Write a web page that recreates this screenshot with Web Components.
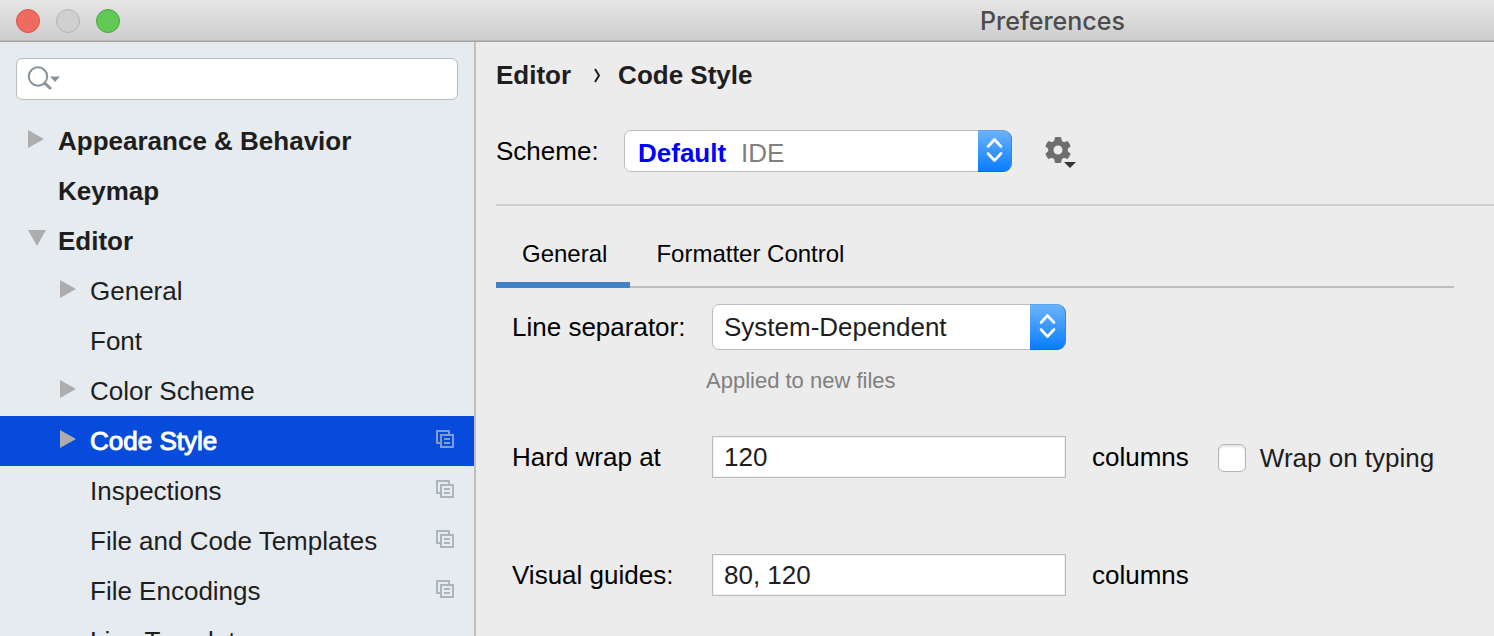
<!DOCTYPE html>
<html lang="en">
<head>
<meta charset="utf-8">
<meta name="viewport" content="width=device-width, initial-scale=1">
<title>Preferences</title>
<style>
  html, body { margin: 0; height: 100%; }
  body {
    overflow: hidden;
    background: #ececec;
    color: #000;
    font: 26px/32px "Liberation Sans", Arial, sans-serif;
  }
</style>
</head>
<body>
<pref-window>
  <title-bar slot="title">Preferences</title-bar>
  <settings-sidebar slot="sidebar">
    <tree-item strong arrow="right">Appearance &amp; Behavior</tree-item>
    <tree-item strong>Keymap</tree-item>
    <tree-item strong arrow="down">Editor</tree-item>
    <tree-item nested arrow="right">General</tree-item>
    <tree-item nested>Font</tree-item>
    <tree-item nested arrow="right">Color Scheme</tree-item>
    <tree-item nested selected project arrow="right">Code Style</tree-item>
    <tree-item nested project>Inspections</tree-item>
    <tree-item nested project>File and Code Templates</tree-item>
    <tree-item nested project>File Encodings</tree-item>
    <tree-item nested>Live Templates</tree-item>
  </settings-sidebar>
  <crumb-trail></crumb-trail>
  <scheme-picker></scheme-picker>
  <tab-strip></tab-strip>
  <code-style-form></code-style-form>
</pref-window>

<script>
  const define = (name, html, setup) => {
    const template = document.createElement('template');
    template.innerHTML = html;
    customElements.define(name, class extends HTMLElement {
      constructor() {
        super();
        this.attachShadow({ mode: 'open' }).append(template.content.cloneNode(true));
      }
      connectedCallback() { if (setup) setup(this, this.shadowRoot); }
    });
  };

  // Pop-up menu look shared by every drop-down.
  const popupCss = `
    .popup { display: grid; grid-template-columns: 1fr auto; }
    .popup select {
      grid-area: 1 / 1 / 2 / 3; width: 100%; margin: 0; box-sizing: border-box;
      appearance: none; border: 1px solid #bcbcbc; border-radius: 7px 9px 9px 7px;
      background: #fff; color: #1e1e1e; font: inherit;
    }
    .popup popup-arrows { grid-area: 1 / 2; pointer-events: none; z-index: 1; }
  `;

  define('popup-arrows', `
    <style>
      :host {
        display: flex; align-items: center; justify-content: center; box-sizing: border-box;
        border: 1px solid; border-color: #58a5f8 #2b85f5 #0f67ee #2b85f5; border-left: 0;
        border-radius: 0 9px 9px 0; background: linear-gradient(#6bb3fa, #097dff);
      }
    </style>
    <svg width="17" height="40" viewBox="0 0 17 40" fill="none" stroke="#fff" stroke-linecap="round" stroke-linejoin="round" aria-hidden="true">
      <path d="M2 15.500L8.500 8.500L15 15.500M2 22.500L8.500 29.500L15 22.500" stroke-width="2.600"/>
    </svg>
  `);

  define('pref-window', `
    <style>
      :host { display: flex; flex-direction: column; height: 100%; overflow: hidden; }
      .body { display: flex; flex: 1; min-height: 0; }
      main { flex: 1; min-width: 0; padding: 17px 0 0 20px; }
    </style>
    <slot name="title"></slot>
    <div class="body"><slot name="sidebar"></slot><main><slot></slot></main></div>
  `);

  define('title-bar', `
    <style>
      :host {
        display: flex; align-items: center; box-sizing: border-box; flex: none; height: 42px;
        padding: 0 16px; border-bottom: 1px solid #a3a3a3;
        background: linear-gradient(#e6e6e6, #cdcdcd); color: #4c4c4c;
        box-shadow: inset 0 -1px #b9b9b9;
        font-family: Inter, sans-serif;
      }
      .lights { display: flex; gap: 16px; margin-right: 860px; }
      button { width: 24px; height: 24px; padding: 0; border: 1px solid #b4b4b4; border-radius: 50%; background: #d0d0d0; }
      .close { background: #ef6b5f; border-color: #d9534a; }
      .zoom { background: #61c956; border-color: #4aa83e; }
      h1 { margin: 0; font-size: 25px; font-weight: 500; }
    </style>
    <div class="lights">
      <button class="close" aria-label="Close"></button>
      <button aria-label="Minimize" disabled></button>
      <button class="zoom" aria-label="Zoom"></button>
    </div>
    <h1><slot></slot></h1>
  `);

  define('settings-sidebar', `
    <style>
      :host {
        display: flex; flex-direction: column; gap: 16px; flex: none; width: 474px;
        padding-top: 16px; border-right: 2px solid #bfbfbf; background: #e6ebef;
      }
      .search { display: grid; align-items: center; margin: 0 16px; }
      .search > * { grid-area: 1 / 1; }
      input {
        width: 100%; height: 42px; box-sizing: border-box; padding: 0 12px 0 52px;
        border: 1px solid #b9bdc0; border-radius: 6px; background: #fff; font: inherit;
        box-shadow: inset 0 0 1px #d9d9d9;
      }
      svg { margin-left: 11px; z-index: 1; pointer-events: none; }
    </style>
    <div class="search">
      <input type="search" aria-label="Search settings">
      <svg width="34" height="26" viewBox="0 0 34 26" aria-hidden="true">
        <circle cx="11" cy="10.500" r="9.200" fill="none" stroke="#87939a" stroke-width="2"/>
        <path d="M17 16.500L24 23" stroke="#87939a" stroke-width="3"/>
        <path d="M23 10.500h10l-5 5.500z" fill="#87939a"/>
      </svg>
    </div>
    <nav aria-label="Settings"><slot></slot></nav>
  `);

  define('tree-item', `
    <style>
      :host { display: block; }
      a {
        display: flex; align-items: center; height: 50px; padding: 0 20px 0 28px;
        color: #1e1e1e; text-decoration: none;
      }
      :host([nested]) a { padding-left: 60px; }
      :host([strong]) a { font-weight: 700; }
      :host([selected]) a { background: #064bdb; color: #fff; -webkit-text-stroke: 1px; }
      .arrow, .project { flex: none; width: 18px; height: 18px; margin-bottom: 4px; }
      .arrow { margin-right: 12px; fill: #adadad; }
      .arrow path, .project { display: none; }
      :host([arrow="right"]) .right, :host([arrow="down"]) .down, :host([project]) .project { display: block; }
      .text { flex: 1; }
      .project { fill: none; stroke: #a9b6be; stroke-width: 2; }
      :host([selected]) .project { stroke: #829dca; }
    </style>
    <a href="#">
      <svg class="arrow" viewBox="0 0 18 18" aria-hidden="true"><path class="right" d="M0 0L16 9L0 18z"/><path class="down" d="M0 0H18L9 16z"/></svg>
      <span class="text"><slot></slot></span>
      <svg class="project" viewBox="0 0 18 18" aria-hidden="true"><path d="M13 4V1H1V13H4M5 5H17V17H5zM8 9H14M8 13H14"/></svg>
    </a>
  `, (host, root) => {
    if (host.hasAttribute('selected')) root.querySelector('a').setAttribute('aria-current', 'page');
  });

  define('crumb-trail', `
    <style>
      :host { display: block; font-weight: 700; color: #1e1e1e; }
      nav { display: flex; align-items: center; }
      a { color: inherit; text-decoration: none; }
      svg { margin: 0 16px 0 23px; }
    </style>
    <nav aria-label="Breadcrumb">
      <a href="#">Editor</a>
      <svg width="8" height="16" viewBox="0 0 8 16" fill="none" stroke="#1e1e1e" stroke-width="2" aria-hidden="true"><path d="M1 2L5 8.500L1 15"/></svg>
      <a href="#" aria-current="page">Code Style</a>
    </nav>
  `);

  define('scheme-picker', `
    <style>
      ${popupCss}
      :host { display: flex; align-items: center; margin-top: 39px; padding-bottom: 32px; border-bottom: 2px solid #ccc; }
      label { width: 128px; }
      .popup { width: 388px; }
      .popup select { height: 42px; padding: 3px 48px 0 13px; color: #00f; font-weight: 700; }
      .origin { grid-area: 1 / 1; z-index: 1; padding: 7px 0 0 117px; color: #808080; line-height: 32px; pointer-events: none; }
      .popup popup-arrows { width: 34px; }
      .gear { display: flex; margin-left: 33px; padding: 0; border: 0; background: none; }
    </style>
    <label for="scheme">Scheme:</label>
    <div class="popup">
      <select id="scheme"><option>Default</option></select>
      <span class="origin">IDE</span>
      <popup-arrows></popup-arrows>
    </div>
    <button class="gear" aria-label="Scheme actions">
      <svg width="32" height="34" viewBox="0 0 32 34" aria-hidden="true">
        <g transform="translate(13 16)" fill="#6e6e6e">
          <path id="tooth" d="M-4 -8L-3.200 -12.200Q-3 -13 -2 -13H2Q3 -13 3.200 -12.200L4 -8z"/>
          <use href="#tooth" transform="rotate(60)"/><use href="#tooth" transform="rotate(120)"/>
          <use href="#tooth" transform="rotate(180)"/><use href="#tooth" transform="rotate(240)"/>
          <use href="#tooth" transform="rotate(300)"/>
          <circle r="7.200" fill="none" stroke="#6e6e6e" stroke-width="5.400"/>
        </g>
        <path d="M19 28H31L25 34z" fill="#333"/>
      </svg>
    </button>
  `);

  define('tab-strip', `
    <style>
      :host { display: block; margin: 26px 40px 0 0; box-shadow: inset 0 -2px #bfbfbf; }
      div { display: flex; }
      button {
        box-sizing: border-box; height: 56px; padding: 0 23px 6px 26px; border: 0;
        border-bottom: 6px solid transparent; background: none; color: #000;
        font: inherit; font-size: 24px;
      }
      [aria-selected="true"] { border-color: #4083c9; }
    </style>
    <div role="tablist">
      <button role="tab" aria-selected="true">General</button>
      <button role="tab" aria-selected="false">Formatter Control</button>
    </div>
  `);

  define('code-style-form', `
    <style>
      ${popupCss}
      :host { display: block; padding: 16px 0 0 16px; }
      form { display: grid; grid-template-columns: 200px 354px 1fr; row-gap: 76px; align-items: center; }
      .separator {
        display: grid; grid-template-columns: subgrid; grid-column: 1 / -1;
        row-gap: 15px; align-items: center; margin-bottom: -37px;
      }
      .popup select { height: 46px; padding: 0 48px 0 11px; }
      .popup popup-arrows { width: 36px; }
      .hint { grid-column: 2; margin-left: -6px; color: #808080; font-size: 22px; }
      input[type="text"] {
        box-sizing: border-box; width: 100%; height: 42px; padding: 0 11px;
        border: 1px solid #bcbcbc; background: #fff; color: #1e1e1e; font: inherit;
        box-shadow: inset 0 0 0 1px #f0f0f0;
      }
      .after, .check { display: flex; align-items: center; }
      .after { padding-left: 26px; }
      .check { gap: 14px; margin-left: 29px; padding-top: 2px; color: #1e1e1e; }
      input[type="checkbox"] {
        appearance: none; width: 28px; height: 28px; margin: 0;
        border: 1px solid #b5b5b5; border-radius: 6px; background: #fff;
        box-shadow: inset 0 2px 2px #e4e4e4;
      }
    </style>
    <form>
      <div class="separator">
        <label for="line">Line separator:</label>
        <div class="popup">
          <select id="line" aria-describedby="hint"><option>System-Dependent</option></select>
          <popup-arrows></popup-arrows>
        </div>
        <span class="hint" id="hint">Applied to new files</span>
      </div>
      <label for="wrap">Hard wrap at</label>
      <input id="wrap" type="text" value="120">
      <div class="after">
        <span>columns</span>
        <span class="check"><input id="typing" type="checkbox"><label for="typing">Wrap on typing</label></span>
      </div>
      <label for="guides">Visual guides:</label>
      <input id="guides" type="text" value="80, 120">
      <div class="after"><span>columns</span></div>
    </form>
  `);
</script>
</body>
</html>
